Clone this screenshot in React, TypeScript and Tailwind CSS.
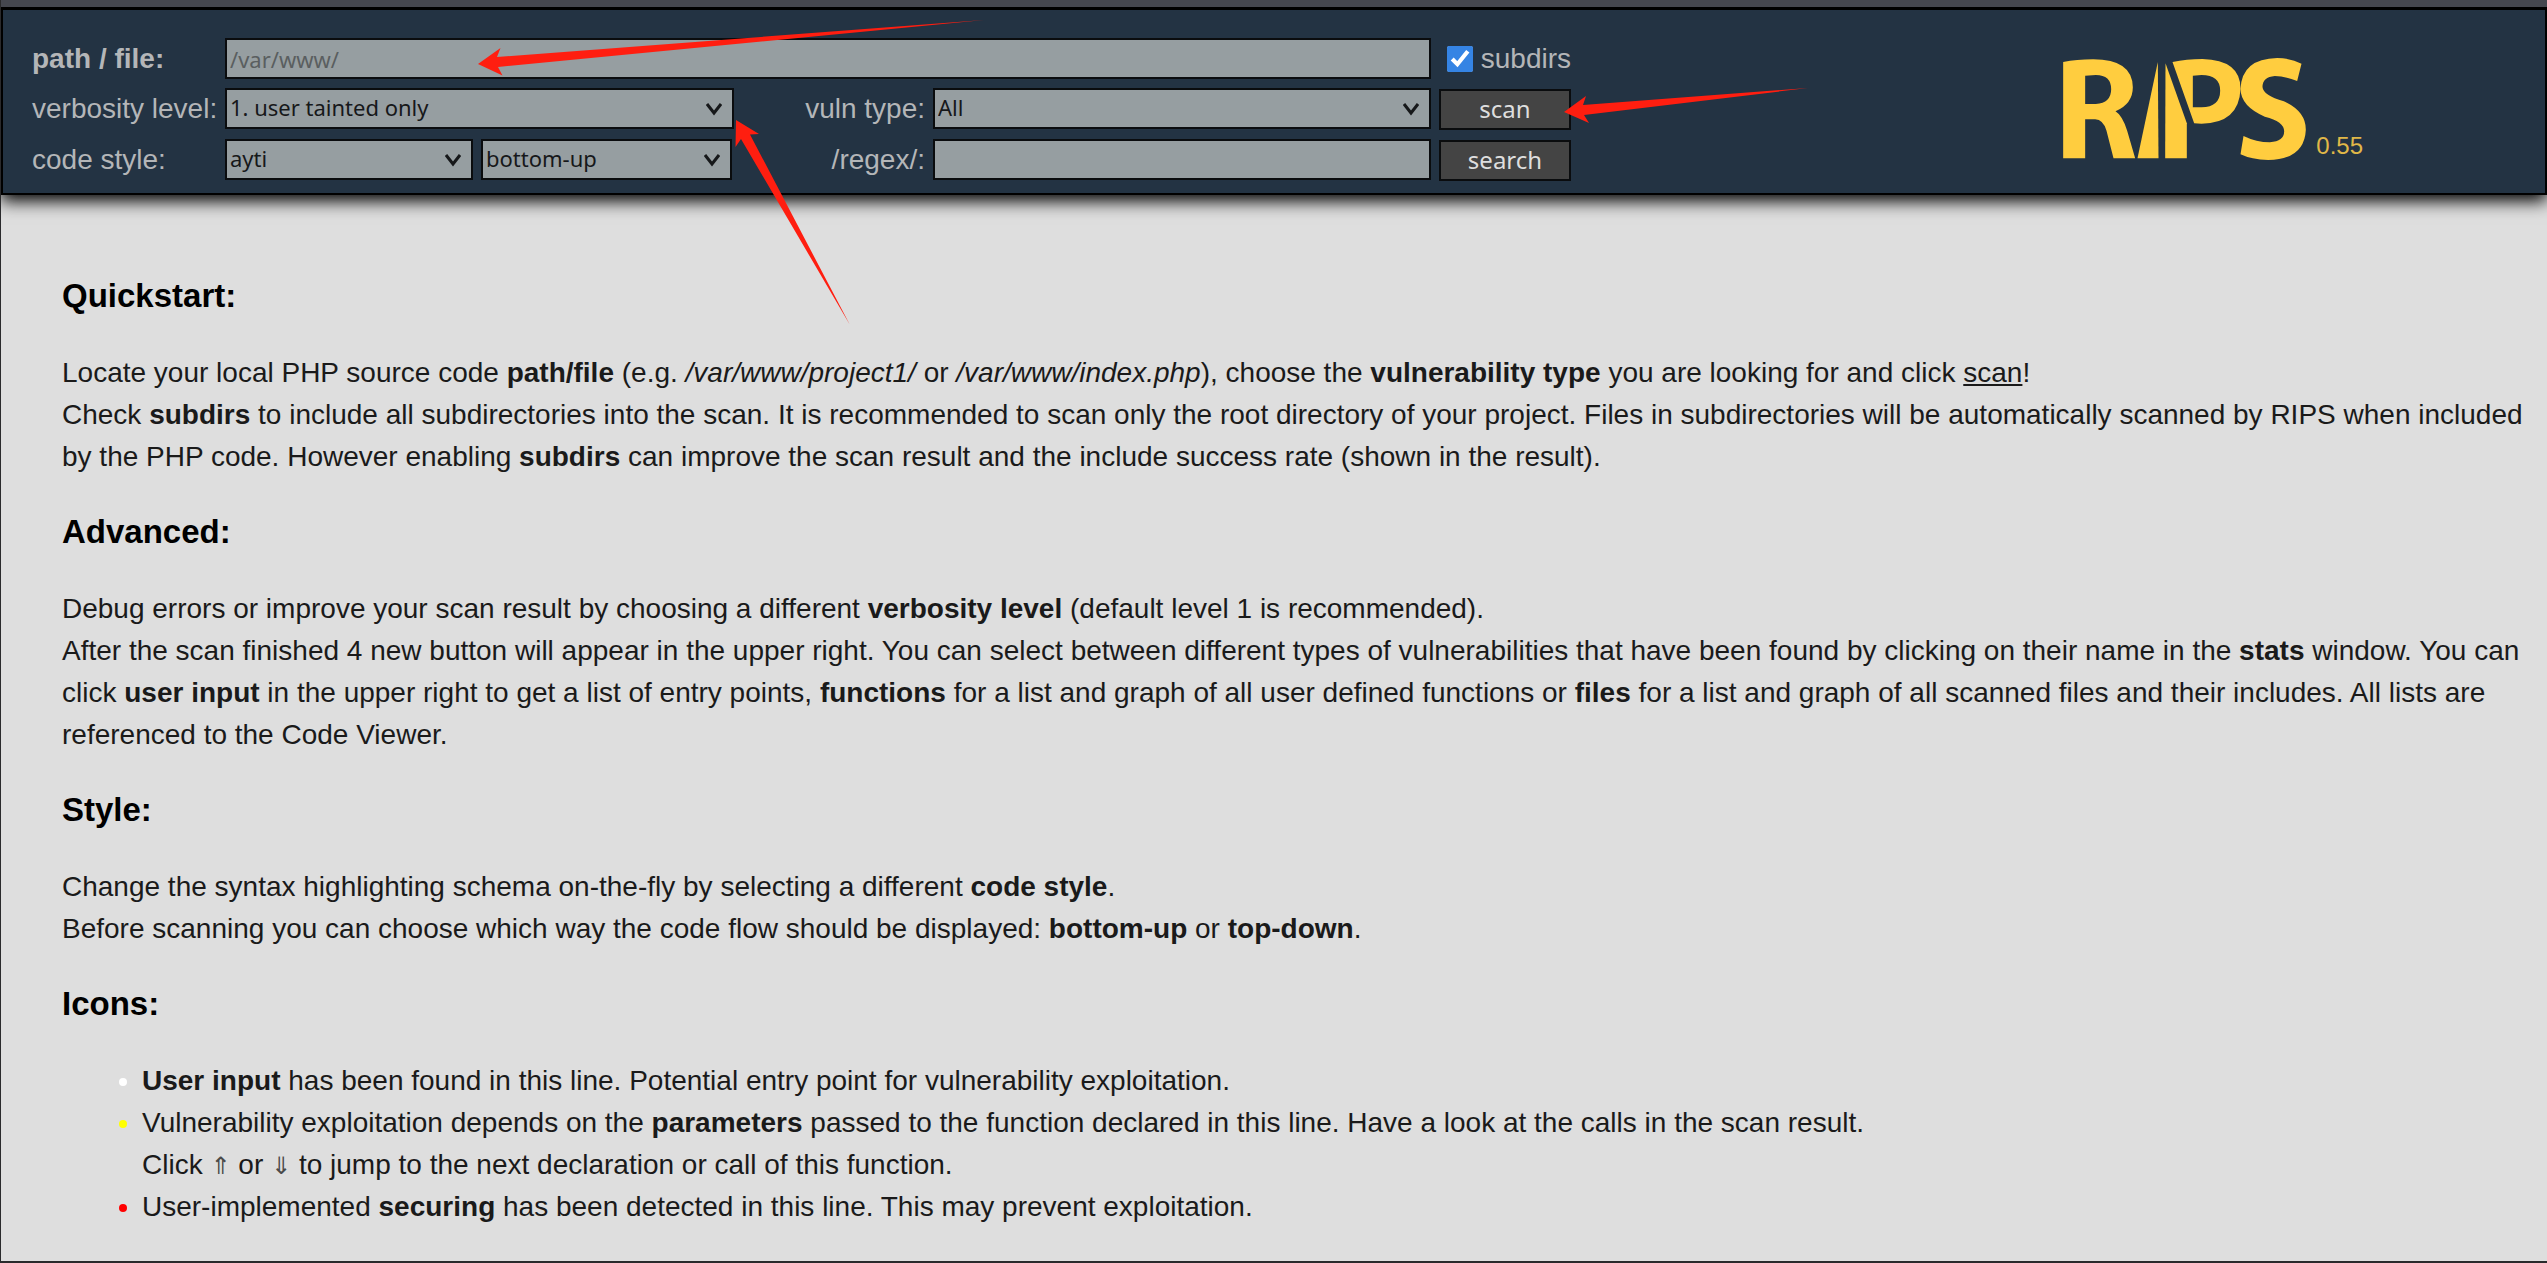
import type { ReactNode } from 'react';

const FIELD = 'h-[41px] w-full rounded-none border-2 border-[#0a0c0e] bg-[#969ea1] px-[3px] font-["Noto_Sans",sans-serif] text-[22px] text-[#16181a]';
const BUTTON = 'h-[41px] w-full cursor-pointer border-2 border-[#0a0c0e] bg-[#444444] font-["Noto_Sans",sans-serif] text-[24px] leading-6 text-[#dedede]';

interface SelectFieldProps {
    id: string;
    label?: string;
    options: string[];
}

const SelectField = ({ id, label, options }: SelectFieldProps) => (
    <div className="relative w-full">
        <select id={id} name={id} aria-label={label} className={`${FIELD} block appearance-none pb-[3px] leading-[32px]`}>
            {options.map((option) => (
                <option key={option}>{option}</option>
            ))}
        </select>
        <svg className="pointer-events-none absolute top-[13px] right-3 h-4 w-4" viewBox="0 0 16 16" fill="none">
            <path d="M1 3 L8 12 L15 3" stroke="#16181a" strokeWidth="3" />
        </svg>
    </div>
);

const Section = ({ title, children }: { title: string; children: ReactNode }) => (
    <section>
        <h3 className="mb-9 text-[33px] leading-[40px] font-bold text-black">{title}</h3>
        {children}
    </section>
);

const Logo = () => (
    <svg className="h-[102px] w-[243px]" viewBox="0 0 728 306" fill="#ffcd3f" role="img" aria-label="RIPS">
        <path
            fillRule="evenodd"
            d="M0 12 Q40 4 90 4 Q208 4 209 88 Q209 138 157 160 Q177 172 192 218 L216 301 L151 301 L130 218 Q120 185 96 184 L66 184 L66 301 L0 301 Z M66 53 L66 138 L98 138 Q144 135 144 94 Q144 51 98 51 Z"
        />
        <path d="M284 12 L286 301 L223 301 Z" />
        <path d="M307 16 L371 196 L371 301 L306 301 Z" />
        <path
            fillRule="evenodd"
            d="M328 12 Q370 3 418 3 Q532 6 532 92 Q528 195 415 197 L393 196 Z M389 53 L389 148 L415 148 Q471 146 471 98 Q471 51 415 51 Z"
        />
        <path d="M715 17 L702 69 Q665 54 635 54 Q598 57 598 87 Q600 112 662 130 Q728 160 728 215 Q724 304 615 306 Q565 305 532 289 L541 234 Q580 253 620 253 Q663 250 663 220 Q663 190 605 176 Q533 145 532 93 Q536 2 642 0 Q685 1 715 17 Z" />
    </svg>
);

const Arrows = () => (
    <svg className="pointer-events-none absolute top-0 left-0 z-20 h-[340px] w-[1820px]" viewBox="0 0 1820 340" fill="#ff1e10">
        <path d="M477 64 L499.5 48 L496 57 L983 20 L497 67 L501.5 75.5 Z" />
        <path d="M1563 112 L1585 96 L1582 105 L1807 88 L1583 115 L1588 123 Z" />
        <path d="M735 120 L758 134 L749 134.5 L849 325 L740 139 L734.5 147 Z" />
    </svg>
);

const App = () => {
    return (
        <div className='relative min-h-screen overflow-hidden border-b-2 border-l border-[#2a2a2c] bg-[#dedede] font-["Liberation_Sans",Arial,sans-serif] text-[28px] leading-[42px] text-[#1a1a1a]'>
            <div className="relative z-10 h-[7px] bg-[#45474f]" />
            <header className="flex items-start justify-between border-x-2 border-t-3 border-b-2 border-black bg-[#233343] pt-7 pb-3 pl-[29px] shadow-[0_6px_16px_#000]">
                <form className="grid grid-cols-[193px_509px_199px_498px_140px] gap-y-[9px] leading-[42px] text-[#b4b6b8]" onSubmit={(e) => e.preventDefault()}>
                    <label htmlFor="location" className="h-[41px] font-bold">path / file:</label>
                    <input id="location" type="text" placeholder="/var/www/" className={`${FIELD} col-span-3 placeholder:text-[#5a5e60]`} />
                    <label className="flex h-[41px] items-center gap-2 pl-4">
                        <input type="checkbox" defaultChecked className="h-7 w-7 accent-[#3584e4]" />
                        subdirs
                    </label>

                    <label htmlFor="verbosity" className="h-[41px]">verbosity level:</label>
                    <SelectField id="verbosity" options={['1. user tainted only', '2. file/DB tainted +1', '3. show secured +1,2', '4. untainted +1,2,3', '5. debug mode']} />
                    <label htmlFor="vector" className="h-[41px] pr-2 text-right">vuln type:</label>
                    <SelectField id="vector" options={['All', 'Server-side', 'Client-side']} />
                    <div className="pl-2">
                        <button type="submit" className={BUTTON}>scan</button>
                    </div>

                    <label htmlFor="css" className="h-[41px]">code style:</label>
                    <div className="grid grid-cols-[248px_251px] gap-x-2">
                        <SelectField id="css" label="code style" options={['ayti', 'barf', 'code-dark', 'phps']} />
                        <SelectField id="treestyle" label="code flow" options={['bottom-up', 'top-down']} />
                    </div>
                    <label htmlFor="search" className="h-[41px] pr-2 text-right">/regex/:</label>
                    <input id="search" type="text" className={FIELD} />
                    <div className="pl-2">
                        <button type="button" className={BUTTON}>search</button>
                    </div>
                </form>

                <div className="flex items-end gap-[10px] pt-5 pr-[182px] text-[24px] leading-[28px] text-[#e0b848]">
                    <Logo />
                    <span>0.55</span>
                </div>
            </header>

            <main className="flex flex-col gap-[34px] pt-[81px] pb-6 pl-[61px]">
                <Section title="Quickstart:">
                    <p>
                        Locate your local PHP source code <b>path/file</b> (e.g. <em>/var/www/project1/</em> or <em>/var/www/index.php</em>), choose the{' '}
                        <b>vulnerability type</b> you are looking for and click <a href="#location" className="underline">scan</a>!
                        <br />
                        Check <b>subdirs</b> to include all subdirectories into the scan. It is recommended to scan only the root directory of your project. Files in
                        subdirectories will be automatically scanned by RIPS when included by the PHP code. However enabling <b>subdirs</b> can improve the scan
                        result and the include success rate (shown in the result).
                    </p>
                </Section>

                <Section title="Advanced:">
                    <p>
                        Debug errors or improve your scan result by choosing a different <b>verbosity level</b> (default level 1 is recommended).
                        <br />
                        After the scan finished 4 new button will appear in the upper right. You can select between different types of vulnerabilities that have been
                        found by clicking on their name in the <b>stats</b> window. You can click <b>user input</b> in the upper right to get a list of entry points,{' '}
                        <b>functions</b> for a list and graph of all user defined functions or <b>files</b> for a list and graph of all scanned files and their
                        includes. All lists are referenced to the Code Viewer.
                    </p>
                </Section>

                <Section title="Style:">
                    <p>
                        Change the syntax highlighting schema on-the-fly by selecting a different <b>code style</b>.
                        <br />
                        Before scanning you can choose which way the code flow should be displayed: <b>bottom-up</b> or <b>top-down</b>.
                    </p>
                </Section>

                <Section title="Icons:">
                    <ul className="list-disc pl-20">
                        <li className="marker:text-white">
                            <b>User input</b> has been found in this line. Potential entry point for vulnerability exploitation.
                        </li>
                        <li className="marker:text-[#ffff00]">
                            Vulnerability exploitation depends on the <b>parameters</b> passed to the function declared in this line. Have a look at the calls in the
                            scan result.
                            <br />
                            Click <span className='font-["DejaVu_Sans",sans-serif] text-[24px] leading-none text-[#4a4a4a]'>⇑</span> or{' '}
                            <span className='font-["DejaVu_Sans",sans-serif] text-[24px] leading-none text-[#4a4a4a]'>⇓</span> to jump to the next declaration or call of
                            this function.
                        </li>
                        <li className="marker:text-[#ff0000]">
                            User-implemented <b>securing</b> has been detected in this line. This may prevent exploitation.
                        </li>
                    </ul>
                </Section>
            </main>

            <Arrows />
        </div>
    );
};

export default App;
